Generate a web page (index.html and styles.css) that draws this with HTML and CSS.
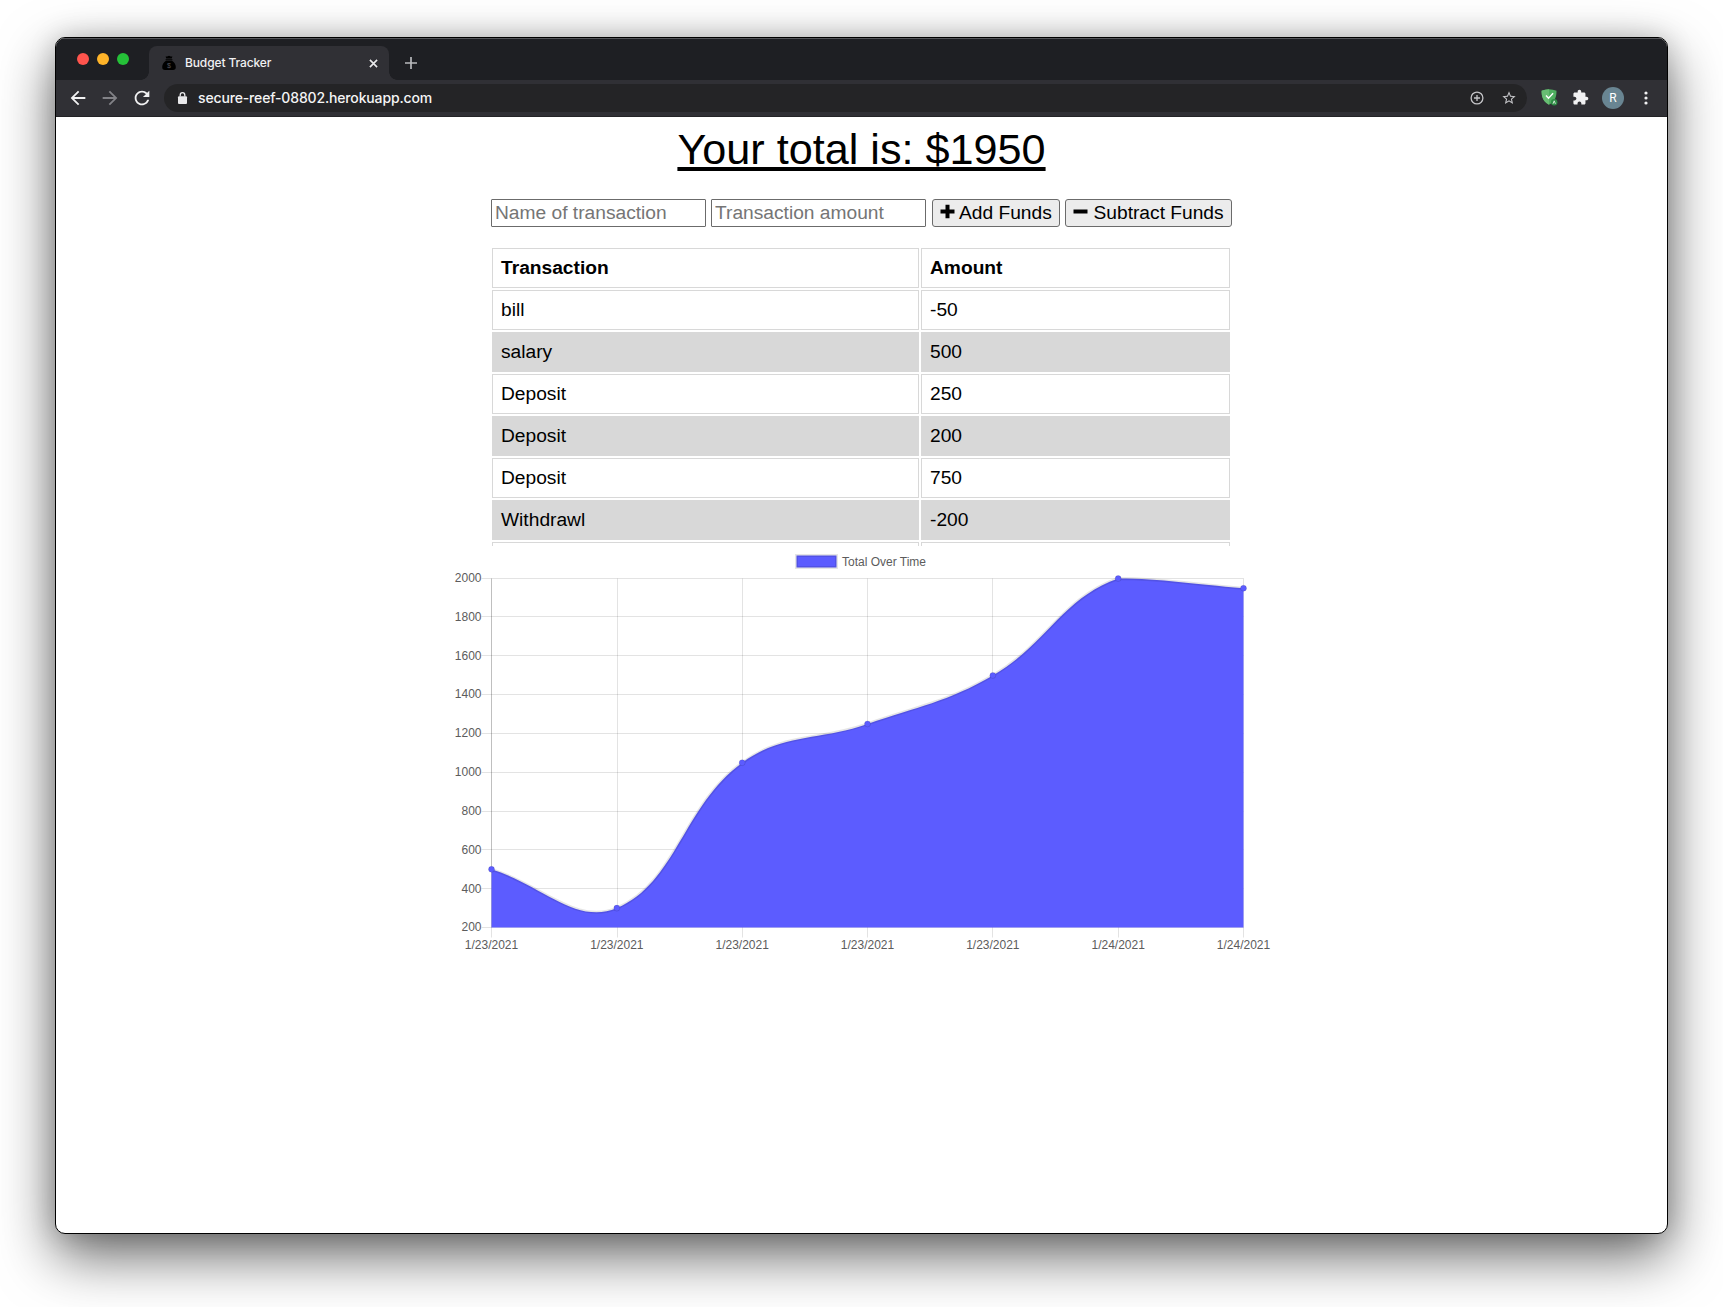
FILE: index.html
```html
<!DOCTYPE html>
<html lang="en">
<head>
<meta charset="utf-8">
<title>Budget Tracker</title>
<link rel="stylesheet" href="styles.css">
</head>
<body>
<div class="window">
  <header class="tabstrip">
    <div class="lights"><i class="red"></i><i class="amber"></i><i class="green"></i></div>
    <div class="tab">
      <svg class="favicon" viewBox="0 0 14 16"><path d="M3.600 1.400 5.200 1.600 7 .8l1.800.8 1.600-.2-.7 2.200H4.300zM3.600 4.200h6.800v1H3.600zM4 5.800h6c2.400 1.400 3.800 3.800 3.800 6.200 0 2.200-1 3-2.800 3H3C1.200 15 .2 14.200.2 12 .2 9.600 1.600 7.200 4 5.800z"/><text x="7" y="12.800">$</text></svg>
      <span class="tab-title">Budget Tracker</span>
      <svg class="close" viewBox="0 0 10 10"><path d="M1 1l8 8M9 1l-8 8"/></svg>
    </div>
    <svg class="newtab" viewBox="0 0 12 12"><path d="M6 0v12M0 6h12"/></svg>
  </header>
  <nav class="toolbar">
    <svg class="nav-icon" viewBox="0 0 24 24"><path d="M20 11H7.830l5.590-5.590L12 4l-8 8 8 8 1.410-1.410L7.830 13H20v-2z"/></svg>
    <svg class="nav-icon dim" viewBox="0 0 24 24"><path d="M12 4l-1.410 1.410L16.170 11H4v2h12.170l-5.580 5.590L12 20l8-8z"/></svg>
    <svg class="nav-icon" viewBox="0 0 24 24"><path d="M17.650 6.350C16.200 4.900 14.210 4 12 4c-4.420 0-7.990 3.580-7.990 8s3.570 8 7.990 8c3.730 0 6.840-2.550 7.730-6h-2.080c-.82 2.330-3.040 4-5.650 4-3.310 0-6-2.690-6-6s2.690-6 6-6c1.660 0 3.140.69 4.220 1.780L13 11h7V4l-2.350 2.350z"/></svg>
    <div class="omnibox">
      <svg class="lock" viewBox="0 0 9 12"><rect x="0" y="4.200" width="9" height="7.800" rx="1"/><path d="M2.200 4.500V3a2.300 2.300 0 0 1 4.600 0v1.500"/></svg>
      <span class="url">secure-reef-08802.herokuapp.com</span>
      <svg class="zoom" viewBox="0 0 14 14"><circle cx="7" cy="7" r="5.900"/><path d="M7 4v6M4 7h6"/></svg>
      <svg class="star" viewBox="0 0 24 24"><path d="M22 9.240l-7.190-.62L12 2 9.190 8.630 2 9.240l5.460 4.730L5.820 21 12 17.270 18.180 21l-1.630-7.030L22 9.240zM12 15.400l-3.760 2.270 1-4.280-3.320-2.880 4.380-.38L12 6.100l1.710 4.040 4.380.38-3.320 2.880 1 4.280L12 15.400z"/></svg>
    </div>
    <svg class="shield" viewBox="0 0 17 17"><path fill="#4fae60" d="M8 .3C5.500.4 2.600.9.600 1.800c0 5 .7 10.400 7.400 13.900 6.700-3.500 7.500-8.900 7.500-13.900C13.500.9 10.500.4 8 .3z"/><path fill="#68bd73" d="M8 .3C5.500.4 2.600.9.600 1.800c0 5 .7 10.400 7.400 13.900z"/><path fill="none" stroke="#fff" stroke-width="1.400" d="M5 6.600l2.500 2.600 4.600-5"/><circle cx="13.200" cy="13.200" r="3.200" fill="#2e8b45"/><path fill="none" stroke="#dff3e2" stroke-width=".9" d="M12 14.800l1.200-3 1.200 3"/></svg>
    <svg class="puzzle" viewBox="0 0 24 24"><path d="M20.500 11H19V7c0-1.100-.9-2-2-2h-4V3.500C13 2.120 11.880 1 10.500 1S8 2.120 8 3.500V5H4c-1.100 0-1.990.9-1.990 2v3.800H3.500c1.490 0 2.700 1.210 2.700 2.700s-1.210 2.700-2.700 2.700H2V20c0 1.100.9 2 2 2h3.800v-1.500c0-1.490 1.210-2.700 2.700-2.700 1.490 0 2.700 1.210 2.700 2.700V22H17c1.100 0 2-.9 2-2v-4h1.500c1.380 0 2.500-1.120 2.500-2.500S21.880 11 20.500 11z"/></svg>
    <span class="avatar">R</span>
    <svg class="dots" viewBox="0 0 4 14"><circle cx="2" cy="2" r="1.600"/><circle cx="2" cy="7" r="1.600"/><circle cx="2" cy="12" r="1.600"/></svg>
  </nav>
  <main class="page">
    <h1 class="total">Your total is: $1950</h1>
    <form class="form">
      <input class="field" type="text" placeholder="Name of transaction">
      <input class="field" type="text" placeholder="Transaction amount">
      <button class="btn add" type="button"><svg viewBox="0 0 15 15"><path d="M7.500 .8v13.400M.5 7.500h14"/></svg>Add Funds</button>
      <button class="btn sub" type="button"><svg viewBox="0 0 15 15"><path d="M.5 7.500h14"/></svg>Subtract Funds</button>
    </form>
    <div class="transactions">
      <table class="ledger">
        <colgroup><col class="col-name"><col></colgroup>
        <thead><tr><th>Transaction</th><th>Amount</th></tr></thead>
        <tbody>
          <tr><td>bill</td><td>-50</td></tr>
          <tr><td>salary</td><td>500</td></tr>
          <tr><td>Deposit</td><td>250</td></tr>
          <tr><td>Deposit</td><td>200</td></tr>
          <tr><td>Deposit</td><td>750</td></tr>
          <tr><td>Withdrawl</td><td>-200</td></tr>
          <tr><td></td><td></td></tr>
        </tbody>
      </table>
    </div>
    <svg class="chart" viewBox="0 0 841 420">
      <g class="legend"><rect x="355.500" y="9.500" width="40" height="12"/><text x="401" y="20">Total Over Time</text></g>
      <g transform="translate(50.5 32.5)">
        <path class="grid" d="M-10 0H752M-10 38H752M-10 77H752M-10 116H752M-10 155H752M-10 194H752M-10 233H752M-10 271H752M-10 310H752M-10 349H752M126 0V359M251 0V359M376 0V359M501 0V359M627 0V359M752 0V359"/>
        <path class="axis" d="M0 0V349"/><path class="grid" d="M0 349V359"/>
        <path class="area" d="M0 290.830C50.130 306.340 84.620 346.930 125.330 329.610C184.890 304.270 191.110 227.950 250.670 184.190C291.380 154.280 326.470 162.660 376 145.420C426.740 127.760 455.310 123.640 501.330 96.940C555.570 65.470 570.770 19.460 626.670 0C671.040 0 701.870 5.810 752 9.690V349H0z"/>
        <path class="line" d="M0 290.830C50.130 306.340 84.620 346.930 125.330 329.610C184.890 304.270 191.110 227.950 250.670 184.190C291.380 154.280 326.470 162.660 376 145.420C426.740 127.760 455.310 123.640 501.330 96.940C555.570 65.470 570.770 19.460 626.670 0C671.040 0 701.870 5.810 752 9.690"/>
        <g class="points"><circle cx="0" cy="290.830" r="3"/><circle cx="125.330" cy="329.610" r="3"/><circle cx="250.670" cy="184.190" r="3"/><circle cx="376" cy="145.420" r="3"/><circle cx="501.330" cy="96.940" r="3"/><circle cx="626.670" cy="0" r="3"/><circle cx="752" cy="9.690" r="3"/></g>
        <g class="ylabels"><text x="-10" y="3.500">2000</text><text x="-10" y="42.500">1800</text><text x="-10" y="81.500">1600</text><text x="-10" y="119.500">1400</text><text x="-10" y="158.500">1200</text><text x="-10" y="197.500">1000</text><text x="-10" y="236.500">800</text><text x="-10" y="275">600</text><text x="-10" y="314">400</text><text x="-10" y="352">200</text></g>
        <g class="xlabels"><text x="0" y="370.500">1/23/2021</text><text x="125.330" y="370.500">1/23/2021</text><text x="250.670" y="370.500">1/23/2021</text><text x="376" y="370.500">1/23/2021</text><text x="501.330" y="370.500">1/23/2021</text><text x="626.670" y="370.500">1/24/2021</text><text x="752" y="370.500">1/24/2021</text></g>
      </g>
    </svg>
  </main>
</div>
</body>
</html>
```
FILE: styles.css
```css
* { box-sizing: border-box; }
body {
  margin: 0;
  height: 1307px;
  overflow: hidden;
  padding: 37px 55px 0;
  background: #fff;
  font-family: "Liberation Sans", Arial, sans-serif;
}
svg { display: block; flex: none; overflow: visible; }
.window {
  width: 1613px;
  height: 1197px;
  border: 1px solid #000;
  border-radius: 10px;
  overflow: hidden;
  background: #fff;
  box-shadow: 0 22px 56px rgba(0, 0, 0, .6), 0 0 26px rgba(0, 0, 0, .17);
}
.tabstrip {
  display: flex;
  height: 42px;
  padding-left: 21px;
  background: #1e1f23;
  box-shadow: inset 0 1px #55565a;
}
.lights { display: flex; gap: 8px; width: 72px; padding-top: 15px; }
.lights i { width: 12px; height: 12px; border-radius: 50%; }
.red { background: #ff544d; }
.amber { background: #ffb429; }
.green { background: #25c138; }
.tab {
  position: relative;
  display: flex;
  align-items: center;
  width: 240px;
  height: 34px;
  margin-top: 8px;
  padding: 0 11px 0 13px;
  border-radius: 8px 8px 0 0;
  background: #303035;
}
.tab::before, .tab::after {
  content: "";
  position: absolute;
  bottom: 0;
  width: 8px;
  height: 8px;
}
.tab::before { left: -8px; background: radial-gradient(circle at 0 0, transparent 7.5px, #303035 8px); }
.tab::after { right: -8px; background: radial-gradient(circle at 100% 0, transparent 7.5px, #303035 8px); }
.favicon { width: 14px; height: 16px; fill: #000; }
.favicon text { fill: #55555a; font-size: 7px; text-anchor: middle; }
.tab-title {
  flex: 1;
  padding-left: 9px;
  color: #f1f1f2;
  font: 500 12px/16px Inter, sans-serif;
  letter-spacing: -.12px;
}
.close { width: 9px; height: 9px; fill: none; stroke: #e8e8ea; stroke-width: 1.8; }
.newtab { width: 12px; height: 12px; margin: 19px 0 0 16px; fill: none; stroke: #b9babd; stroke-width: 1.7; }
.toolbar {
  display: flex;
  align-items: center;
  height: 37px;
  padding: 0 19px 1px 11px;
  border-bottom: 1px solid #232326;
  background: #303035;
}
.nav-icon { width: 22px; height: 22px; margin-right: 10px; fill: #f1f1f2; }
.dim { fill: #828287; }
.omnibox {
  display: flex;
  align-items: center;
  width: 1363px;
  height: 28px;
  margin-left: 1px;
  padding: 0 10px 0 14px;
  border-radius: 14px;
  background: #242426;
}
.lock { width: 9px; height: 12px; fill: #e8e8ea; }
.lock path { fill: none; stroke: #e8e8ea; stroke-width: 1.3; }
.url {
  flex: 1;
  padding-left: 11px;
  color: #f4f4f5;
  font: 500 14px/20px Inter, sans-serif;
  letter-spacing: -.15px;
}
.zoom { width: 14px; height: 14px; margin-right: 17px; fill: none; stroke: #c4c4c7; stroke-width: 1.3; }
.star { width: 16px; height: 16px; fill: #c4c4c7; }
.shield { width: 17px; height: 17px; margin-left: 14px; }
.puzzle { width: 17px; height: 17px; margin-left: 14px; fill: #f1f1f2; }
.avatar {
  width: 22px;
  height: 22px;
  margin-left: 13px;
  border-radius: 50%;
  background: #698592;
  color: #fff;
  font: 12px/22px Roboto, sans-serif;
  text-align: center;
}
.dots { width: 4px; height: 14px; margin-left: 20px; fill: #f1f1f2; }
.page { display: flex; flex-direction: column; align-items: center; }
.total {
  margin: 7px 0 0;
  font-size: 43.2px;
  font-weight: 400;
  line-height: 50px;
  text-decoration: underline;
  text-decoration-thickness: 4px;
  text-underline-offset: 3px;
}
.form { display: flex; width: 741px; height: 28px; margin-top: 25px; }
.field {
  width: 215px;
  height: 28px;
  margin-right: 5px;
  padding: 1px 3px;
  border: 1px solid #6b6b6b;
  border-radius: 1px;
  font: 19.2px/22px "Liberation Sans", Arial, sans-serif;
}
.field::placeholder { color: #757575; }
.btn {
  display: flex;
  height: 28px;
  padding: 2px 7px 0;
  border: 1px solid #6b6b6b;
  border-radius: 3px;
  background: #ececec;
  color: #000;
  font: 19.2px/22px "Liberation Sans", Arial, sans-serif;
  white-space: nowrap;
}
.btn svg { width: 15px; height: 15px; margin: 1.5px 4px 0 0; fill: none; stroke: #000; stroke-width: 4; }
.add { width: 128px; margin: 0 5px 0 1px; }
.sub { width: 167px; }
.sub svg { margin-right: 5.5px; }
.transactions { width: 743px; height: 300px; margin-top: 19px; overflow: hidden; }
.ledger {
  width: 742px;
  table-layout: fixed;
  border-spacing: 2px;
  font-size: 19.2px;
  line-height: 22px;
}
.col-name { width: 427px; }
.ledger th, .ledger td { height: 40px; padding: 8px; border: 1px solid #d8d8d8; text-align: left; }
.ledger tbody tr:nth-child(even) { background: #d8d8d8; }
.chart { width: 841px; height: 420px; font: 12px "Liberation Sans", Arial, sans-serif; }
.chart text { fill: #5c5c5c; }
.legend rect { fill: #5c5cff; stroke: rgba(0, 0, 0, .1); stroke-width: 3; }
.grid { fill: none; stroke: rgba(0, 0, 0, .11); }
.axis { stroke: rgba(0, 0, 0, .25); }
.area { fill: #5c5cff; }
.line { fill: none; stroke: rgba(0, 0, 0, .1); stroke-width: 3; }
.points circle { fill: #5c5cff; stroke: rgba(0, 0, 0, .1); }
.ylabels { text-anchor: end; }
.xlabels { text-anchor: middle; }
```
